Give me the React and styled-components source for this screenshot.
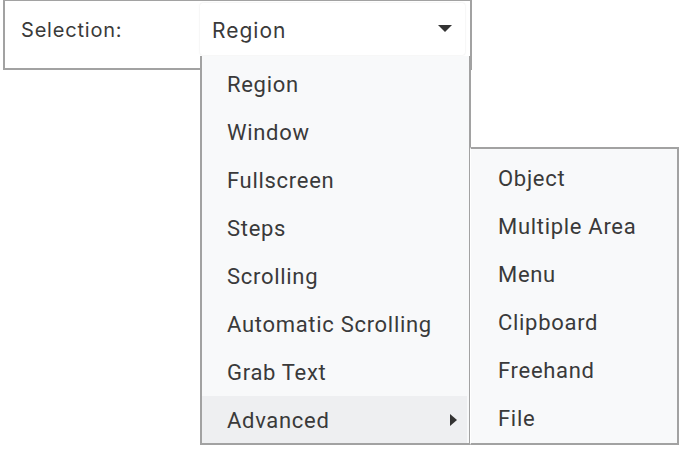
import React from "react"
import styled, { createGlobalStyle } from "styled-components"

const GlobalStyle = createGlobalStyle`
  html, body {
    margin: 0;
    padding: 0;
    background: #ffffff;
  }
`

const OUTLINE = "#a2a2a2"

const mainItems = [
  "Region",
  "Window",
  "Fullscreen",
  "Steps",
  "Scrolling",
  "Automatic Scrolling",
  "Grab Text",
  "Advanced",
]

const advancedItems = ["Object", "Multiple Area", "Menu", "Clipboard", "Freehand", "File"]

const Page = styled.div`
  position: relative;
  width: 680px;
  height: 450px;
  overflow: hidden;
  background: #ffffff;
`

const Panel = styled.div`
  box-sizing: border-box;
  display: flex;
  align-items: flex-start;
  width: 469px;
  height: 70px;
  margin-left: 3px;
  padding-top: 2px;
  background: #ffffff;
  border: 2px solid ${OUTLINE};
  border-top-width: 1px;
`

const Label = styled.div`
  box-sizing: border-box;
  width: 195px;
  height: 52px;
  padding: 2px 0 0 16px;
  display: flex;
  align-items: center;
  font-family: Inter, "Liberation Sans", sans-serif;
  font-size: 20px;
  letter-spacing: 0.8px;
  color: #3a3a3a;
`

const SelectWrap = styled.div`
  position: relative;
`

const SelectBox = styled.div`
  box-sizing: border-box;
  display: flex;
  align-items: center;
  justify-content: space-between;
  width: 265px;
  height: 52px;
  padding: 3px 13px 0 12px;
  background: #ffffff;
  border-radius: 3px;
  box-shadow: 0 0 2px rgba(0, 0, 0, 0.12);
  font-family: Inter, "Liberation Sans", sans-serif;
  font-size: 21px;
  letter-spacing: 1px;
  color: #3a3a3a;
`

const Caret = styled.span`
  width: 0;
  height: 0;
  border-left: 7px solid transparent;
  border-right: 7px solid transparent;
  border-top: 7px solid #333333;
  margin-top: -4px;
`

const Menu = styled.div`
  box-sizing: border-box;
  position: absolute;
  left: 0;
  top: 53px;
  width: 271px;
  height: 389px;
  padding: 4px 2px 0 0;
  overflow: hidden;
  background: #f8f9fa;
  border: 2px solid ${OUTLINE};
  border-top: none;
  z-index: 2;

  &::before {
    content: "";
    position: absolute;
    left: -2px;
    top: 0;
    width: 2px;
    height: 12px;
    background: #ffffff;
  }
`

const SubMenu = styled.div`
  box-sizing: border-box;
  position: absolute;
  left: 270px;
  top: 144px;
  width: 209px;
  height: 298px;
  padding-top: 5px;
  overflow: hidden;
  background: #f8f9fa;
  border: 2px solid ${OUTLINE};
  border-left: 1px solid #ffffff;
  z-index: 3;
`

const Item = styled.div`
  box-sizing: border-box;
  display: flex;
  align-items: center;
  justify-content: space-between;
  height: 48px;
  flex-shrink: 0;
  padding: 0 10px 0 ${p => p.$indent}px;
  font-family: Roboto, "Liberation Sans", sans-serif;
  font-size: 22px;
  letter-spacing: 0.7px;
  color: #3a3a3a;
  background: ${p => (p.$active ? "#eeeff1" : "transparent")};
`

const Arrow = styled.span`
  width: 0;
  height: 0;
  border-top: 6px solid transparent;
  border-bottom: 6px solid transparent;
  border-left: 7px solid #333333;
`

const App = () => {
  return (
    <Page>
      <GlobalStyle />
      <Panel>
        <Label>Selection:</Label>
        <SelectWrap>
          <SelectBox>
            <span>Region</span>
            <Caret />
          </SelectBox>
          <Menu>
            {mainItems.map(name => (
              <Item key={name} $indent={25} $active={name === "Advanced"}>
                <span>{name}</span>
                {name === "Advanced" && <Arrow />}
              </Item>
            ))}
          </Menu>
          <SubMenu>
            {advancedItems.map(name => (
              <Item key={name} $indent={27}>
                {name}
              </Item>
            ))}
          </SubMenu>
        </SelectWrap>
      </Panel>
    </Page>
  )
}

export default App
